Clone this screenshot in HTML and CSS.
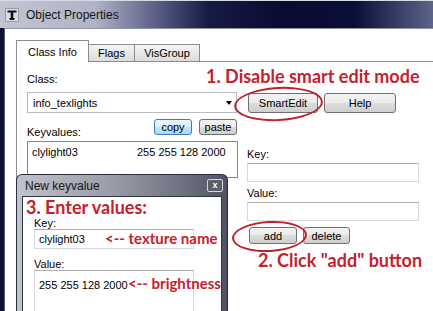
FILE: index.html
```html
<!DOCTYPE html>
<html lang="en">
<head>
    <meta charset="UTF-8">
    <title>Object Properties</title>
    <link rel="stylesheet" href="styles.css">
</head>
<body>
    <div class="window">
        <div class="titlebar">
            <svg class="app-icon" width="14" height="14" viewBox="0 0 14 14">
                <rect x="0.5" y="0.5" width="13" height="13" fill="#dcdce4" stroke="#9a9aa8"/>
                <path d="M2.5 2.5h9v2h-3.2v5.5h-2.6v-5.5h-3.2z" fill="#111"/>
                <path d="M4 10h6l-1 2h-4z" fill="#111"/>
            </svg>
            <span>Object Properties</span>
        </div>
        <div class="client">
            <div class="tabs">
                <div class="tab active">Class Info</div>
                <div class="tab flags">Flags</div>
                <div class="tab visgroup">VisGroup</div>
            </div>
            <div class="page">
                <div class="row">
                    <div class="left label">Class:</div>
                </div>
                <div class="row row-class">
                    <div class="left combo">
                        <span>info_texlights</span>
                        <span class="arrow"></span>
                    </div>
                    <div class="right top-buttons">
                        <button class="btn wide">SmartEdit</button>
                        <button class="btn wide help">Help</button>
                    </div>
                </div>
                <div class="row row-kv">
                    <div class="left kv-head">
                        <span>Keyvalues:</span>
                        <div class="small-btns">
                            <button class="btn small focus">copy</button>
                            <button class="btn small">paste</button>
                        </div>
                    </div>
                </div>
                <div class="row row-list">
                    <div class="left list">
                        <div class="list-row">
                            <span class="list-key">clylight03</span>
                            <span>255 255 128 2000</span>
                        </div>
                    </div>
                    <div class="right editor">
                        <div class="label">Key:</div>
                        <div class="field"></div>
                        <div class="label gap">Value:</div>
                        <div class="field"></div>
                        <div class="edit-buttons">
                            <button class="btn mini add">add</button>
                            <button class="btn mini">delete</button>
                        </div>
                    </div>
                </div>
            </div>
        </div>
    </div>

    <div class="note note-1">1. Disable smart edit mode</div>
    <div class="note note-2">2. Click "add" button</div>
    <div class="ring ring-smart"></div>
    <div class="ring ring-add"></div>

    <div class="dialog">
        <div class="dialog-title">
            <span>New keyvalue</span>
            <span class="close">x</span>
        </div>
        <div class="dialog-body">
            <div class="note-head">3. Enter values:</div>
            <div class="label dlg-label">Key:</div>
            <div class="dlg-field">
                <span>clylight03</span>
                <span class="note side-note note-tex">&lt;-- texture name</span>
            </div>
            <div class="label dlg-label gap-lg">Value:</div>
            <div class="dlg-field dlg-area">
                <span>255 255 128 2000</span>
                <span class="note side-note note-bright">&lt;-- brightness</span>
            </div>
        </div>
    </div>
</body>
</html>
```

FILE: styles.css
```css
body {
    margin: 0;
    width: 433px;
    height: 311px;
    overflow: hidden;
    position: relative;
    background: #0c1034;
    font-family: "Liberation Sans", Arial, sans-serif;
    font-size: 11px;
    color: #000;
}
.window {
    height: 311px;
    display: flex;
    flex-direction: column;
    background: #0c1034;
}
.titlebar {
    height: 28px;
    flex: none;
    box-sizing: border-box;
    display: flex;
    align-items: center;
    gap: 7px;
    padding-left: 5px;
    font-size: 12px;
    color: #151515;
    border-top: 1px solid #d8dae6;
    background: linear-gradient(to right, #c4c5d2 0%, #b0b2c6 22%, #5a5f86 36%, #161b44 48%, #080c30 65%, #0a0f38 82%, #5d6488 100%);
}
.app-icon {
    flex: none;
}
.client {
    flex: 1;
    display: flex;
    flex-direction: column;
    margin-left: 4px;
    padding: 11px 0 0 11px;
    background: #fff;
    border-top: 1px solid #8f95ae;
    border-left: 1px solid #5a5f78;
    box-sizing: border-box;
    min-height: 0;
}
.tabs {
    display: flex;
    align-items: flex-end;
    height: 21px;
    flex: none;
}
.tab {
    box-sizing: border-box;
    height: 17px;
    line-height: 16px;
    text-align: center;
    border: 1px solid #898c95;
    border-left: none;
    border-bottom: none;
    background: linear-gradient(#f4f4f4, #dcdcdc);
}
.tab.active {
    width: 73px;
    height: 22px;
    line-height: 22px;
    margin-bottom: -1px;
    border-left: 1px solid #898c95;
    background: #fff;
    position: relative;
    z-index: 1;
}
.tab.flags {
    width: 46px;
}
.tab.visgroup {
    width: 65px;
}
.page {
    flex: 1;
    min-height: 0;
    border-top: 1px solid #898c95;
    border-left: 1px solid #898c95;
    padding: 10px 0 0 10px;
}
.row {
    display: flex;
    gap: 9px;
}
.left {
    width: 211px;
    box-sizing: border-box;
}
.right {
    width: 172px;
}
.label {
    line-height: 14px;
    height: 14px;
}
.row-class {
    margin-top: 6px;
}
.combo {
    width: 210px;
    height: 21px;
    border: 1px solid #b9bcc4;
    display: flex;
    align-items: center;
    justify-content: space-between;
    padding-left: 5px;
}
.arrow {
    width: 0;
    height: 0;
    border-left: 3.5px solid transparent;
    border-right: 3.5px solid transparent;
    border-top: 4px solid #000;
    margin-right: 4px;
}
.top-buttons {
    display: flex;
    gap: 6px;
    margin: 1px 0 0 2px;
}
.btn {
    font-family: "Liberation Sans", Arial, sans-serif;
    font-size: 11px;
    color: #000;
    padding: 0;
    box-sizing: border-box;
    border: 1px solid #707070;
    border-radius: 3px;
    background: linear-gradient(#f2f2f2 0%, #ebebeb 50%, #dddddd 50%, #cfcfcf 100%);
}
.btn.wide {
    width: 70px;
    height: 20px;
}
.btn.help {
    width: 72px;
}
.row-kv {
    margin-top: 6px;
}
.kv-head {
    display: flex;
    justify-content: space-between;
    align-items: flex-end;
    height: 16px;
    padding-right: 1px;
}
.kv-head span {
    line-height: 12px;
    margin-bottom: -3px;
}
.small-btns {
    display: flex;
    gap: 7px;
}
.btn.small {
    width: 38px;
    height: 16px;
}
.btn.focus {
    border-color: #3c7fb1;
    background: linear-gradient(#eaf6fd 0%, #d9f0fc 50%, #bee6fd 50%, #a7d9f5 100%);
}
.row-list {
    margin-top: 6px;
}
.list {
    height: 37px;
    border: 1px solid #828790;
    padding: 3px 0 0 4px;
}
.list-row {
    display: flex;
    line-height: 14px;
}
.list-key {
    width: 105px;
}
.editor {
    padding-top: 6px;
}
.field {
    height: 19px;
    box-sizing: border-box;
    margin-top: 2px;
    border: 1px solid #d5d8df;
    border-top-color: #abadb3;
}
.label.gap {
    margin-top: 4px;
}
.edit-buttons {
    display: flex;
    gap: 6px;
    margin: 6px 0 0 2px;
}
.btn.mini {
    width: 47px;
    height: 17px;
}
.btn.add {
    width: 48px;
}

/* annotations drawn over the screenshot */
.note {
    position: absolute;
    font-family: Lato, "Liberation Sans", sans-serif;
    font-weight: bold;
    font-size: 18px;
    line-height: 20px;
    color: #c5212d;
    white-space: nowrap;
}
.note-1 {
    left: 206px;
    top: 66px;
}
.note-2 {
    left: 258px;
    top: 250px;
}
.ring {
    position: absolute;
    box-sizing: border-box;
    border: 2.5px solid #c0202a;
    border-radius: 50%;
}
.ring-smart {
    left: 234px;
    top: 87px;
    width: 89px;
    height: 34px;
    transform: rotate(-3deg);
}
.ring-add {
    left: 232px;
    top: 221px;
    width: 75px;
    height: 31px;
    transform: rotate(-3deg);
}

.dialog {
    position: absolute;
    left: 16px;
    top: 174px;
    width: 212px;
    height: 137px;
    box-sizing: border-box;
    display: flex;
    flex-direction: column;
    border: 1px solid #2a2e3e;
    border-bottom: none;
    border-radius: 6px 6px 0 0;
    background: linear-gradient(to right, #c0c2cc 0%, #9a9da9 45%, #6c707e 80%, #4e5262 100%);
    overflow: hidden;
}
.dialog-title {
    height: 21px;
    flex: none;
    display: flex;
    align-items: center;
    justify-content: space-between;
    padding: 0 4px 0 8px;
    font-size: 12px;
    color: #141414;
}
.close {
    width: 16px;
    height: 13px;
    box-sizing: border-box;
    border: 1px solid #d4d6de;
    border-radius: 2px;
    background: #5b5f6c;
    color: #fff;
    font-size: 9px;
    font-weight: bold;
    line-height: 11px;
    text-align: center;
}
.dialog-body {
    flex: 1;
    min-height: 0;
    overflow: hidden;
    margin: 0 5px;
    background: #fff;
    border: 1px solid #30343f;
    border-bottom: none;
    padding-left: 3px;
}
.note-head {
    font-family: Lato, "Liberation Sans", sans-serif;
    font-weight: bold;
    font-size: 18px;
    line-height: 20px;
    color: #c5212d;
}
.dlg-label {
    margin-left: 8px;
    line-height: 12px;
    height: 12px;
}
.dlg-field {
    position: relative;
    width: 160px;
    height: 20px;
    box-sizing: border-box;
    margin: 0 0 0 8px;
    padding: 3px 0 0 4px;
    border: 1px solid #d5d8df;
    border-top-color: #abadb3;
}
.label.gap-lg {
    margin-top: 9px;
}
.dlg-area {
    height: 60px;
    padding-top: 8px;
}
.side-note {
    position: absolute;
    top: 0;
    font-size: 15px;
    line-height: 17px;
}
.note-tex {
    left: 70px;
}
.note-bright {
    left: 93px;
    top: 4px;
}
```
